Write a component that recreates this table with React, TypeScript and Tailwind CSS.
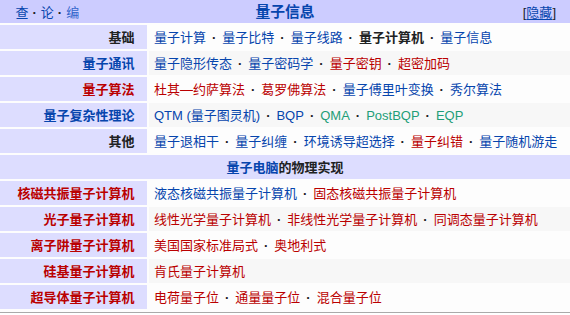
import React from "react";

type Col = "b" | "r" | "g" | "k" | "kb";
type Item = [string, Col];

const colorClass: Record<Col, string> = {
  b: "text-[#0645ad]",
  r: "text-[#ba0000]",
  g: "text-[#1e9e78]",
  k: "text-[#202122]",
  kb: "text-[#202122] font-bold",
};

type Row = { label: string; lc: Col; items: Item[]; even: boolean };

const top: Row[] = [
  {
    label: "基础",
    lc: "k",
    even: false,
    items: [
      ["量子计算", "b"],
      ["量子比特", "b"],
      ["量子线路", "b"],
      ["量子计算机", "kb"],
      ["量子信息", "b"],
    ],
  },
  {
    label: "量子通讯",
    lc: "b",
    even: true,
    items: [
      ["量子隐形传态", "b"],
      ["量子密码学", "b"],
      ["量子密钥", "r"],
      ["超密加码", "r"],
    ],
  },
  {
    label: "量子算法",
    lc: "r",
    even: false,
    items: [
      ["杜其—约萨算法", "r"],
      ["葛罗佛算法", "r"],
      ["量子傅里叶变换", "b"],
      ["秀尔算法", "b"],
    ],
  },
  {
    label: "量子复杂性理论",
    lc: "b",
    even: true,
    items: [
      ["QTM (量子图灵机)", "b"],
      ["BQP", "b"],
      ["QMA", "g"],
      ["PostBQP", "g"],
      ["EQP", "g"],
    ],
  },
  {
    label: "其他",
    lc: "k",
    even: false,
    items: [
      ["量子退相干", "b"],
      ["量子纠缠", "b"],
      ["环境诱导超选择", "b"],
      ["量子纠错", "r"],
      ["量子随机游走", "b"],
    ],
  },
];

const bottom: Row[] = [
  {
    label: "核磁共振量子计算机",
    lc: "r",
    even: false,
    items: [
      ["液态核磁共振量子计算机", "b"],
      ["固态核磁共振量子计算机", "r"],
    ],
  },
  {
    label: "光子量子计算机",
    lc: "r",
    even: true,
    items: [
      ["线性光学量子计算机", "r"],
      ["非线性光学量子计算机", "r"],
      ["同调态量子计算机", "r"],
    ],
  },
  {
    label: "离子阱量子计算机",
    lc: "r",
    even: false,
    items: [
      ["美国国家标准局式", "r"],
      ["奥地利式", "r"],
    ],
  },
  {
    label: "硅基量子计算机",
    lc: "r",
    even: true,
    items: [["肯氏量子计算机", "r"]],
  },
  {
    label: "超导体量子计算机",
    lc: "r",
    even: false,
    items: [
      ["电荷量子位", "r"],
      ["通量量子位", "r"],
      ["混合量子位", "r"],
    ],
  },
];

function Sep() {
  return (
    <span className="inline-block w-[16.3px] text-center font-bold text-[#202122]">
      ·
    </span>
  );
}

function NavRow({ row }: { row: Row }) {
  return (
    <div className="flex h-[24px] gap-[2px]">
      <div
        className={`flex w-[147px] shrink-0 items-center justify-end bg-[#ddddff] pr-[12.5px] font-bold ${colorClass[row.lc]}`}
      >
        {row.label}
      </div>
      <div
        className={`flex flex-1 items-center whitespace-nowrap pl-[5px] ${
          row.even ? "bg-[#f7f7f7]" : "bg-[#fdfdfd]"
        }`}
      >
        {row.items.map((it, i) => (
          <React.Fragment key={i}>
            {i > 0 && <Sep />}
            <span className={colorClass[it[1]]}>{it[0]}</span>
          </React.Fragment>
        ))}
      </div>
    </div>
  );
}

export default function App() {
  return (
    <div className="h-[315px] w-[570px] overflow-hidden bg-white font-['Liberation_Sans','Noto_Sans_CJK_SC',sans-serif] text-[13px] leading-none">
      <div className="border-b border-[#aaaaaa] bg-[#fdfdfd] pb-[3px]">
        <div className="grid h-[23px] grid-cols-[1fr_auto_1fr] items-center bg-[#ccccff] pt-[1px]">
          <div className="flex items-center pl-[15.5px] text-[13px]">
            <span className="text-[#0645ad]">查</span>
            <span className="inline-block w-[12.3px] text-center font-bold text-[#202122]">·</span>
            <span className="text-[#0645ad]">论</span>
            <span className="inline-block w-[12.3px] text-center font-bold text-[#202122]">·</span>
            <span className="text-[#3366cc]">编</span>
          </div>
          <div className="text-[14.8px] font-bold text-[#0645ad]">量子信息</div>
          <div className="flex items-center justify-end pr-[14px] text-[13px] text-[#202122]">
            <span>[</span>
            <span className="text-[#0645ad] underline underline-offset-2">隐藏</span>
            <span>]</span>
          </div>
        </div>
        <div className="mt-[2px] flex flex-col gap-[2px]">
          {top.map((r, i) => (
            <NavRow key={i} row={r} />
          ))}
          <div className="flex h-[24px] items-center justify-center bg-[#ddddff] font-bold">
            <span className="text-[#0645ad]">量子电脑</span>
            <span className="text-[#202122]">的物理实现</span>
          </div>
          {bottom.map((r, i) => (
            <NavRow key={i} row={r} />
          ))}
        </div>
      </div>
    </div>
  );
}
